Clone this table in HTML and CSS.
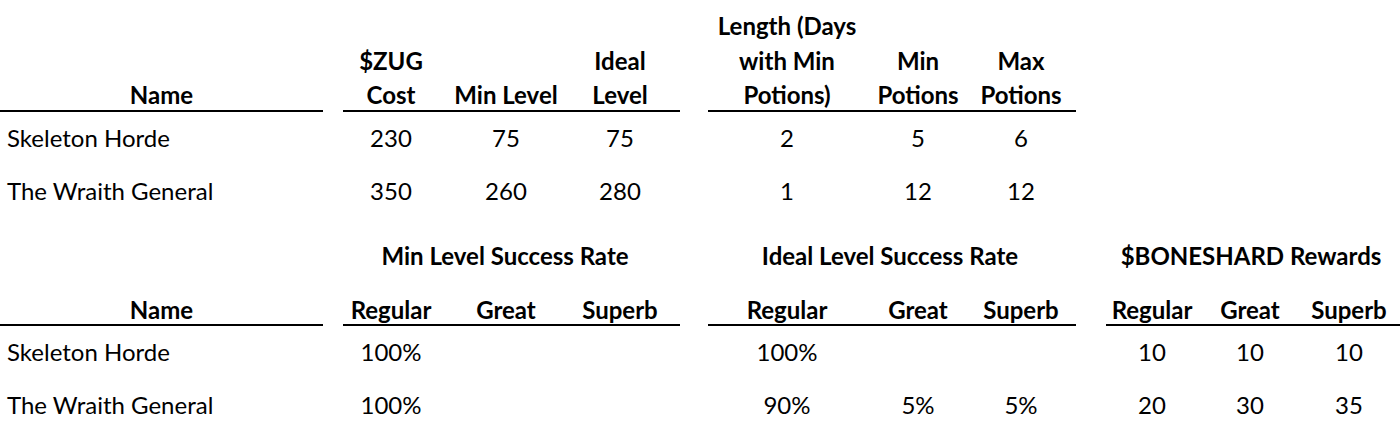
FILE: index.html
```html
<!DOCTYPE html>
<html lang="en">
<head>
<meta charset="utf-8">
<title>Raid stats</title>
<link rel="stylesheet" href="styles.css">
</head>
<body>
<div class="sheet">
  <div class="table t1">
    <div class="row head">
      <div class="name"><span class="lbl">Name</span></div>
      <div class="group g1">
        <div class="c w96">$ZUG<br>Cost</div>
        <div class="c w134">Min Level</div>
        <div class="c w94">Ideal<br>Level</div>
      </div>
      <div class="group g2">
        <div class="c w158">Length (Days<br>with Min<br>Potions)</div>
        <div class="c w104">Min<br>Potions</div>
        <div class="c w102">Max<br>Potions</div>
      </div>
    </div>
    <div class="row data">
      <div class="name">Skeleton Horde</div>
      <div class="group g1">
        <div class="c w96">230</div>
        <div class="c w134">75</div>
        <div class="c w94">75</div>
      </div>
      <div class="group g2">
        <div class="c w158">2</div>
        <div class="c w104">5</div>
        <div class="c w102">6</div>
      </div>
    </div>
    <div class="row data">
      <div class="name">The Wraith General</div>
      <div class="group g1">
        <div class="c w96">350</div>
        <div class="c w134">260</div>
        <div class="c w94">280</div>
      </div>
      <div class="group g2">
        <div class="c w158">1</div>
        <div class="c w104">12</div>
        <div class="c w102">12</div>
      </div>
    </div>
  </div>

  <div class="table t2">
    <div class="row ghead">
      <div class="name"></div>
      <div class="group g1"><div class="c span">Min Level Success Rate</div></div>
      <div class="group g2"><div class="c span">Ideal Level Success Rate</div></div>
      <div class="group g3"><div class="c span">$BONESHARD Rewards</div></div>
    </div>
    <div class="row head">
      <div class="name"><span class="lbl">Name</span></div>
      <div class="group g1">
        <div class="c w96">Regular</div>
        <div class="c w134">Great</div>
        <div class="c w94">Superb</div>
      </div>
      <div class="group g2">
        <div class="c w158">Regular</div>
        <div class="c w104">Great</div>
        <div class="c w102">Superb</div>
      </div>
      <div class="group g3">
        <div class="c w92">Regular</div>
        <div class="c w104">Great</div>
        <div class="c w94">Superb</div>
      </div>
    </div>
    <div class="row data">
      <div class="name">Skeleton Horde</div>
      <div class="group g1">
        <div class="c w96">100%</div>
        <div class="c w134"></div>
        <div class="c w94"></div>
      </div>
      <div class="group g2">
        <div class="c w158">100%</div>
        <div class="c w104"></div>
        <div class="c w102"></div>
      </div>
      <div class="group g3">
        <div class="c w92">10</div>
        <div class="c w104">10</div>
        <div class="c w94">10</div>
      </div>
    </div>
    <div class="row data">
      <div class="name">The Wraith General</div>
      <div class="group g1">
        <div class="c w96">100%</div>
        <div class="c w134"></div>
        <div class="c w94"></div>
      </div>
      <div class="group g2">
        <div class="c w158">90%</div>
        <div class="c w104">5%</div>
        <div class="c w102">5%</div>
      </div>
      <div class="group g3">
        <div class="c w92">20</div>
        <div class="c w104">30</div>
        <div class="c w94">35</div>
      </div>
    </div>
  </div>
</div>
</body>
</html>
```

FILE: styles.css
```css
html, body {
  margin: 0;
  padding: 0;
  background: #fff;
}

.sheet {
  width: 1400px;
  font-family: Lato, "Open Sans", "Liberation Sans", sans-serif;
  font-size: 24px;
  color: #000;
}

.row {
  display: flex;
}

.name {
  flex: none;
  width: 323px;
}

.group {
  flex: none;
  display: flex;
}

.g1 { margin-left: 20px; width: 324px; padding-right: 13px; }
.g2 { margin-left: 28px; width: 364px; padding-right: 4px; }
.g3 { margin-left: 30px; width: 290px; padding-right: 4px; }

.c {
  flex: none;
  text-align: center;
  white-space: nowrap;
}

.w92 { width: 92px; }
.w94 { width: 94px; }
.w96 { width: 96px; }
.w102 { width: 102px; }
.w104 { width: 104px; }
.w134 { width: 134px; }
.w158 { width: 158px; }
.span { width: 100%; }

/* header rows: text sits low in the cell, close to the rule */
.head {
  font-weight: 700;
  line-height: 34.5px;
}

.head .name,
.head .group {
  display: flex;
  align-items: flex-end;
  border-bottom: 2px solid #000;
}

.head .name {
  justify-content: center;
}

.head .c,
.head .lbl {
  margin-bottom: -3px;
}

.t1 .head {
  padding-top: 9px;
}

/* data rows */
.data {
  height: 53px;
  line-height: 52px;
}

.data .name {
  box-sizing: border-box;
  padding-left: 7px;
}

/* second table */
.t2 {
  margin-top: 21px;
}

.ghead {
  font-weight: 700;
  line-height: 34.5px;
  margin-bottom: 19.5px;
}
```
